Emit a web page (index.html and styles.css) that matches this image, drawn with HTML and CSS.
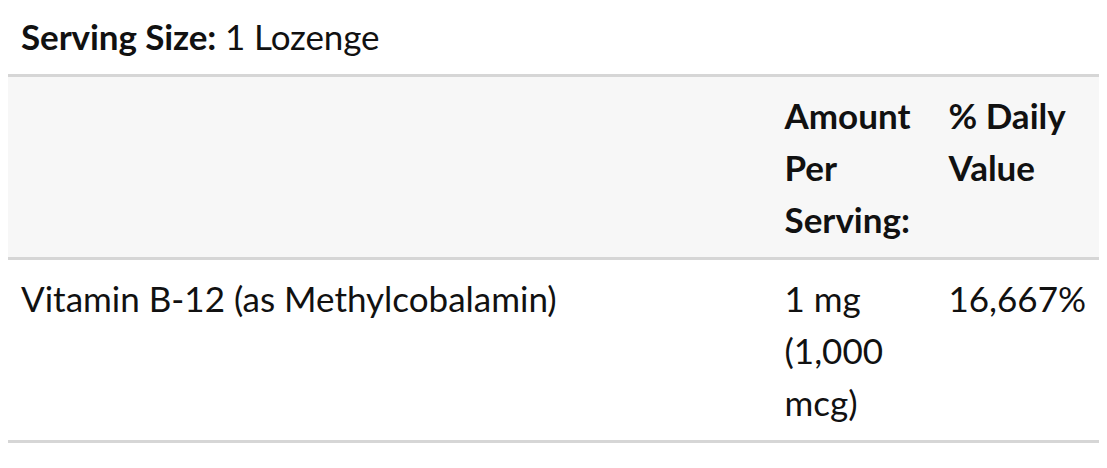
FILE: index.html
```html
<!DOCTYPE html>
<html>
<head>
<meta charset="utf-8">
<link rel="stylesheet" href="styles.css">
</head>
<body>
<table class="facts">
  <caption class="serving"><strong>Serving Size:</strong> 1 Lozenge</caption>
  <thead>
    <tr class="head-row">
      <th class="col-name"></th>
      <th class="col-amount">Amount Per Serving:</th>
      <th class="col-dv">% Daily Value</th>
    </tr>
  </thead>
  <tbody>
    <tr class="body-row">
      <td class="col-name">Vitamin B-12 (as Methylcobalamin)</td>
      <td class="col-amount">1 mg (1,000 mcg)</td>
      <td class="col-dv">16,667%</td>
    </tr>
  </tbody>
</table>
</body>
</html>
```

FILE: styles.css
```css
html, body {
  margin: 0;
  background: #ffffff;
}
body {
  padding: 8px;
  font-family: Lato, "Noto Sans", sans-serif;
  font-size: 35px;
  line-height: 52px;
  color: #111111;
}
.facts {
  width: 100%;
  border-collapse: collapse;
}
.serving {
  text-align: left;
  padding: 2px 13px 12px;
  letter-spacing: -0.1px;
}
.serving strong {
  font-weight: 700;
}
.head-row {
  background: #f7f7f7;
  border-top: 3px solid #d6d6d6;
  border-bottom: 3px solid #d6d6d6;
}
.body-row {
  border-bottom: 3px solid #d6d6d6;
}
th, td {
  text-align: left;
  vertical-align: top;
  padding: 12px 13px;
}
th {
  font-weight: 700;
}
.col-amount {
  width: 138px;
}
.col-dv {
  width: 136px;
}
```
